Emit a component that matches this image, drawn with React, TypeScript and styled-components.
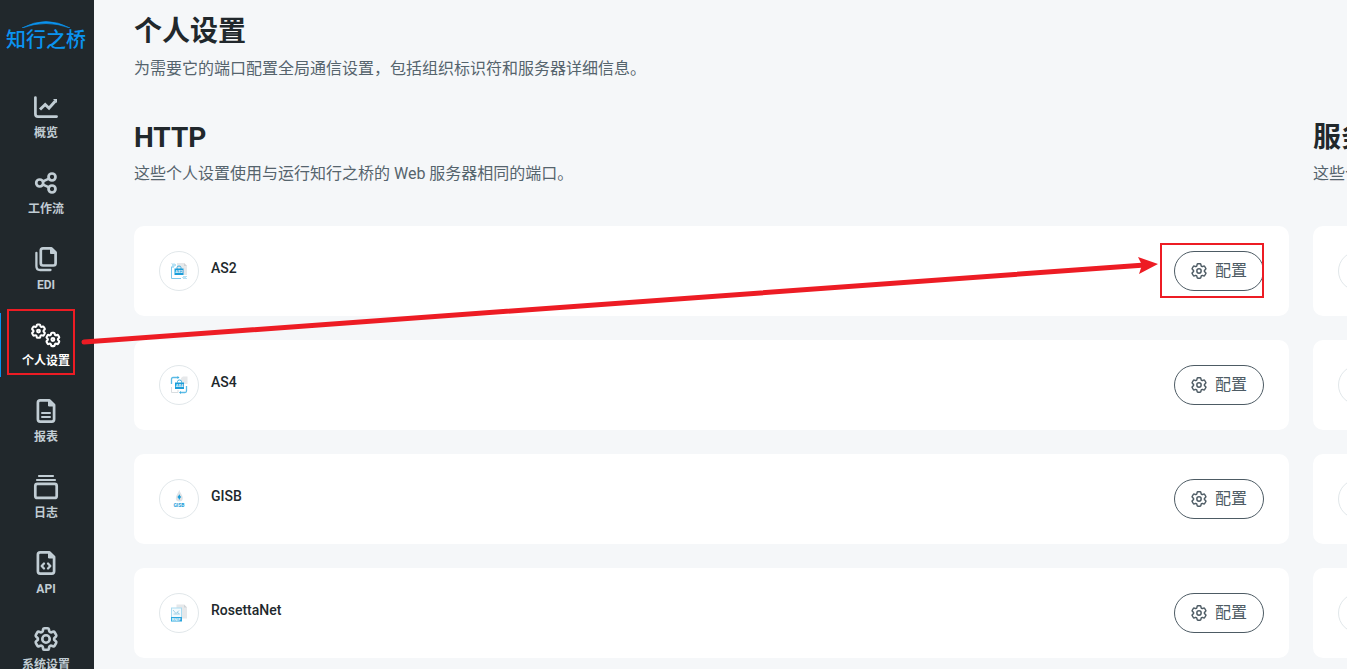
import React from "react";
import styled, { createGlobalStyle } from "styled-components";

const GlobalStyle = createGlobalStyle`
  * { box-sizing: border-box; }
  body {
    margin: 0;
    background: #f5f7f9;
    color: #21282c;
    font-family: Roboto, "Noto Sans CJK SC", sans-serif;
    font-size: 16px;
  }
  h1, h2, h3, p, ul { margin: 0; padding: 0; }
  ul { list-style: none; }
`;

const Page = styled.div`
  position: relative;
  display: flex;
  height: 100vh;
  overflow: hidden;
`;

const Sidebar = styled.aside`
  flex: 0 0 94px;
  padding: 20px 2px 0 0;
  background: #21282c;
`;

const Logo = styled.a`
  display: flex;
  flex-direction: column;
  align-items: center;
  height: 65px;
  color: #0a93f0;
  font-size: 20px;
  line-height: 24px;
  font-weight: 500;
  text-decoration: none;
  white-space: nowrap;
`;

const LogoArc = styled.svg`
  display: block;
  width: 50px;
  height: 8px;
`;

const NavList = styled.ul`
  display: flex;
  flex-direction: column;
  gap: 12px;
`;

const NavLink = styled.a<{ $active?: boolean }>`
  display: flex;
  flex-direction: column;
  align-items: center;
  gap: 4px;
  height: 64px;
  padding-top: 8px;
  color: ${(p) => (p.$active ? "#ffffff" : "#c1cdd4")};
  box-shadow: ${(p) => (p.$active ? "inset 1px 0 0 #0a93f0" : "none")};
  font-size: 12px;
  line-height: 16px;
  font-weight: 700;
  text-decoration: none;
  white-space: nowrap;

  svg { display: block; height: 28px; }
`;

const Main = styled.main`
  flex: 1;
  min-width: 0;
  padding: 11px 0 0 40px;
`;

const Title = styled.h1`
  font-size: 28px;
  line-height: 42px;
  font-weight: 700;
  white-space: nowrap;
`;

const SectionTitle = styled(Title).attrs({ as: "h2" })`
  line-height: 40px;
`;

const Description = styled.p`
  margin-top: 4px;
  color: #55646d;
  line-height: 24px;
  white-space: nowrap;
`;

const Columns = styled.div`
  display: flex;
  gap: 24px;
  margin-top: 37px;
`;

const Column = styled.section`
  flex: 0 0 calc(100% - 58px);
  min-width: 0;
`;

const CardList = styled.ul`
  display: flex;
  flex-direction: column;
  gap: 24px;
  margin-top: 40px;
`;

const Card = styled.li`
  display: flex;
  align-items: center;
  gap: 12px;
  padding: 25px;
  border-radius: 10px;
  background: #ffffff;
`;

const Badge = styled.span`
  display: flex;
  align-items: center;
  justify-content: center;
  width: 40px;
  height: 40px;
  border: 1px solid #e1e7ea;
  border-radius: 50%;
`;

const CardName = styled.h3`
  flex: 1;
  padding-bottom: 6px;
  font-size: 14px;
  line-height: 20px;
  font-weight: 500;
`;

const ConfigButton = styled.button`
  display: flex;
  align-items: center;
  gap: 8px;
  height: 40px;
  padding: 0 16px;
  border: 1px solid #4d5b64;
  border-radius: 20px;
  background: #ffffff;
  color: #4d5b64;
  font: inherit;
  line-height: 24px;
  white-space: nowrap;
  cursor: pointer;
`;

const Annotations = styled.svg`
  position: absolute;
  top: 0;
  left: 0;
  width: 1347px;
  height: 669px;
  pointer-events: none;
`;

const GEAR =
  "M9.594 3.94c.09-.542.56-.94 1.11-.94h2.593c.55 0 1.02.398 1.11.94l.213 1.281c.063.374.313.686.645.87.074.04.147.083.22.127.325.196.72.257 1.075.124l1.217-.456a1.125 1.125 0 0 1 1.37.49l1.296 2.247a1.125 1.125 0 0 1-.26 1.431l-1.003.827c-.293.241-.438.613-.43.992a7.723 7.723 0 0 1 0 .255c-.008.378.137.75.43.991l1.004.827c.424.35.534.955.26 1.43l-1.298 2.247a1.125 1.125 0 0 1-1.369.491l-1.217-.456c-.355-.133-.75-.072-1.076.124a6.47 6.47 0 0 1-.22.128c-.331.183-.581.495-.644.869l-.213 1.281c-.09.543-.56.94-1.11.94h-2.594c-.55 0-1.019-.398-1.11-.94l-.213-1.281c-.062-.374-.312-.686-.644-.87a6.52 6.52 0 0 1-.22-.127c-.325-.196-.72-.257-1.076-.124l-1.217.456a1.125 1.125 0 0 1-1.369-.49l-1.297-2.247a1.125 1.125 0 0 1 .26-1.431l1.004-.827c.292-.24.437-.613.43-.991a6.932 6.932 0 0 1 0-.255c.007-.38-.138-.751-.43-.992l-1.004-.827a1.125 1.125 0 0 1-.26-1.43l1.297-2.247a1.125 1.125 0 0 1 1.37-.491l1.216.456c.356.133.751.072 1.076-.124.072-.044.146-.086.22-.128.332-.183.582-.495.644-.869l.214-1.28Z";

const NavIcon = ({ children }: { children: React.ReactNode }) => (
  <svg
    width="32"
    height="28"
    viewBox="0 0 32 28"
    fill="none"
    stroke="currentColor"
    strokeWidth="2.7"
    strokeLinecap="round"
    strokeLinejoin="round"
    aria-hidden="true"
  >
    {children}
  </svg>
);

const OverviewIcon = () => (
  <NavIcon>
    <path d="M5.4 4.5V21Q5.4 23.6 8 23.6H26.6" />
    <path d="M10 16.5L15.2 11.5L19 15.2L25.4 8" strokeWidth="3" strokeLinejoin="miter" strokeLinecap="butt" />
    <path d="M23 6H27V10Z" fill="currentColor" stroke="none" />
  </NavIcon>
);

const FlowIcon = () => (
  <NavIcon>
    <circle cx="9.7" cy="14" r="3.5" />
    <circle cx="22" cy="8" r="3.5" />
    <circle cx="22" cy="20" r="3.5" />
    <path d="M13 12.4L19 9.6M13 15.6L19 18.4" />
  </NavIcon>
);

const EdiIcon = () => (
  <NavIcon>
    <path d="M13 3.4H21.5L25.6 7.5V18.3Q25.6 20.5 23.4 20.5H13Q10.8 20.5 10.8 18.3V5.6Q10.8 3.4 13 3.4Z" />
    <path d="M20.5 3.4V8.5H25.6Z" fill="currentColor" strokeWidth="1" />
    <path d="M6.4 7.8V21.3Q6.4 25 10.1 25H20.5" strokeWidth="2.3" />
  </NavIcon>
);

const ProfileIcon = () => (
  <NavIcon>
    <g transform="translate(-0.4 1.2) scale(0.74)" strokeWidth="2.8">
      <path d={GEAR} />
      <circle cx="12" cy="12" r="1.9" />
    </g>
    <g transform="translate(14 9.6) scale(0.74)" strokeWidth="2.8">
      <path d={GEAR} />
      <circle cx="12" cy="12" r="1.9" />
    </g>
  </NavIcon>
);

const ReportIcon = () => (
  <NavIcon>
    <path d="M10.2 3.4H19.5L24.1 8V22.3Q24.1 24.6 21.8 24.6H10.2Q7.9 24.6 7.9 22.3V5.7Q7.9 3.4 10.2 3.4Z" />
    <path d="M18.5 3.4V9H24.1Z" fill="currentColor" strokeWidth="1" />
    <path d="M12 16H20M12 20H20" strokeWidth="2" />
  </NavIcon>
);

const LogIcon = () => (
  <NavIcon>
    <path d="M9 3H23M7 7H25" strokeWidth="2.2" />
    <rect x="5.3" y="10.9" width="21.4" height="14" rx="2" />
  </NavIcon>
);

const ApiIcon = () => (
  <NavIcon>
    <path d="M10.2 3.4H19.5L24.1 8V22.3Q24.1 24.6 21.8 24.6H10.2Q7.9 24.6 7.9 22.3V5.7Q7.9 3.4 10.2 3.4Z" />
    <path d="M18.5 3.4V9H24.1Z" fill="currentColor" strokeWidth="1" />
    <path d="M14 14.5L11.7 17L14 19.5M18 14.5L20.3 17L18 19.5" strokeWidth="2.3" />
  </NavIcon>
);

const SystemIcon = () => (
  <NavIcon>
    <g transform="translate(1.6 -0.4) scale(1.2)" strokeWidth="2.2">
      <path d={GEAR} />
      <circle cx="12" cy="12" r="3.1" />
    </g>
  </NavIcon>
);

const ConfigIcon = () => (
  <svg
    width="16"
    height="16"
    viewBox="2 2 20 20"
    fill="none"
    stroke="currentColor"
    strokeWidth="1.8"
    aria-hidden="true"
  >
    <path d={GEAR} />
    <circle cx="12" cy="12" r="2.7" />
  </svg>
);

const MarkText = ({ x, y, fill, size, children }: { x: number; y: number; fill: string; size: number; children: string }) => (
  <text x={x} y={y} fill={fill} fontSize={size} fontWeight="700" textAnchor="middle">
    {children}
  </text>
);

const As2Mark = () => (
  <svg width="20" height="20" viewBox="0 0 20 20" fill="none" aria-hidden="true">
    <path d="M8 2H15L18 5V14H8Z" fill="#e6e8ea" />
    <path d="M15 2V5H18Z" fill="#cfd3d6" />
    <path d="M2.5 6V17.5H12M2.5 6H5" stroke="#7cc9ec" />
    <path d="M3 2.5L4.5 4L3 5.5M5 2.5L6.5 4L5 5.5" stroke="#5bbbe6" strokeWidth="0.9" />
    <path d="M15.5 15L14 16.5L15.5 18M17.5 15L16 16.5L17.5 18" stroke="#5bbbe6" strokeWidth="0.9" />
    <path d="M8 8V6.5Q8 5 10 5T12 6.5V8" stroke="#3aaee0" />
    <rect x="5.5" y="7.5" width="9" height="6.5" fill="#1b9dd9" />
    <MarkText x={10} y={12.4} fill="#ffffff" size={4}>AS2</MarkText>
  </svg>
);

const As4Mark = () => (
  <svg width="20" height="20" viewBox="0 0 20 20" fill="none" aria-hidden="true">
    <path d="M12 3L14 1.5H18.5V9H12Z" fill="#e6e8ea" />
    <path d="M2.5 12V17.5H9V15" stroke="#d9dde0" />
    <path d="M2.5 9V4Q2.5 2.5 4 2.5H9M17.5 11V16Q17.5 17.5 16 17.5H11.5" stroke="#5bbbe6" strokeWidth="1.3" />
    <path d="M8.5 1L10.5 2.5L8.5 4ZM12 16L10 17.5L12 19Z" fill="#3aaee0" />
    <path d="M8.5 7.5V6.5Q8.5 5 10.5 5T12.5 6.5V7.5" stroke="#3aaee0" />
    <rect x="6" y="7.5" width="9" height="6.5" fill="#1b9dd9" />
    <MarkText x={10.5} y={12.4} fill="#ffffff" size={4}>AS4</MarkText>
  </svg>
);

const GisbMark = () => (
  <svg width="20" height="20" viewBox="0 0 20 20" fill="none" aria-hidden="true">
    <path d="M10.3 1C11 4 13.8 6 13.8 9Q13.8 12.5 10.3 12.5T6.8 9C6.8 6 9.6 4 10.3 1Z" fill="#dfe3e6" />
    <path d="M10.3 5.2L11.2 7L12.3 8L11.2 9L10.3 11L9.4 9L8.3 8L9.4 7Z" fill="#1b9dd9" />
    <MarkText x={10} y={17.5} fill="#1b9dd9" size={5}>GISB</MarkText>
  </svg>
);

const RosettaMark = () => (
  <svg width="20" height="20" viewBox="0 0 20 20" fill="none" aria-hidden="true">
    <path d="M7.5 1.5H15L18 4.5V15.5H7.5Z" fill="#e6e8ea" />
    <path d="M15 1.5V4.5H18Z" fill="#cfd3d6" />
    <rect x="2.5" y="5" width="10" height="10" fill="#f3fafd" stroke="#a9dbf1" />
    <path d="M4 7L7 10.5L10 7.5M4.5 11H10.5L8 9" stroke="#8dc5dd" strokeWidth="0.8" />
    <rect x="2" y="14" width="11" height="4.5" fill="#2ba6de" />
    <MarkText x={7} y={17.7} fill="#ffffff" size={4}>RNIF</MarkText>
  </svg>
);

const navItems = [
  { label: "概览", Icon: OverviewIcon },
  { label: "工作流", Icon: FlowIcon },
  { label: "EDI", Icon: EdiIcon },
  { label: "个人设置", Icon: ProfileIcon, active: true },
  { label: "报表", Icon: ReportIcon },
  { label: "日志", Icon: LogIcon },
  { label: "API", Icon: ApiIcon },
  { label: "系统设置", Icon: SystemIcon },
];

const protocols = [
  { name: "AS2", Mark: As2Mark },
  { name: "AS4", Mark: As4Mark },
  { name: "GISB", Mark: GisbMark },
  { name: "RosettaNet", Mark: RosettaMark },
];

export default function App() {
  return (
    <>
      <GlobalStyle />
      <Page>
        <Sidebar>
          <Logo href="#">
            <LogoArc viewBox="0 0 50 8" aria-hidden="true">
              <path d="M1 8Q25 -5 49 8Q25 -1 1 8Z" fill="currentColor" stroke="currentColor" strokeWidth="0.6" />
            </LogoArc>
            知行之桥
          </Logo>
          <nav>
            <NavList>
              {navItems.map(({ label, Icon, active }) => (
                <li key={label}>
                  <NavLink href="#" $active={active}>
                    <Icon />
                    {label}
                  </NavLink>
                </li>
              ))}
            </NavList>
          </nav>
        </Sidebar>
        <Main>
          <Title>个人设置</Title>
          <Description>为需要它的端口配置全局通信设置，包括组织标识符和服务器详细信息。</Description>
          <Columns>
            <Column>
              <SectionTitle>HTTP</SectionTitle>
              <Description>这些个人设置使用与运行知行之桥的 Web 服务器相同的端口。</Description>
              <CardList>
                {protocols.map(({ name, Mark }) => (
                  <Card key={name}>
                    <Badge><Mark /></Badge>
                    <CardName>{name}</CardName>
                    <ConfigButton type="button">
                      <ConfigIcon />
                      配置
                    </ConfigButton>
                  </Card>
                ))}
              </CardList>
            </Column>
            <Column>
              <SectionTitle>服务</SectionTitle>
              <Description>这些个</Description>
              <CardList>
                {protocols.map(({ name }) => (
                  <Card key={name}>
                    <Badge />
                  </Card>
                ))}
              </CardList>
            </Column>
          </Columns>
        </Main>
        <Annotations viewBox="0 0 1347 669" fill="none" stroke="#ed1c24" strokeWidth="2" aria-hidden="true">
          <rect x="8" y="310" width="66" height="64" />
          <rect x="1161" y="244" width="102" height="53" />
          <path d="M84 342L1145 265" strokeWidth="5" strokeLinecap="round" />
          <path d="M1158 264L1138 257L1142 265L1139 274Z" fill="#ed1c24" stroke="none" />
        </Annotations>
      </Page>
    </>
  );
}
